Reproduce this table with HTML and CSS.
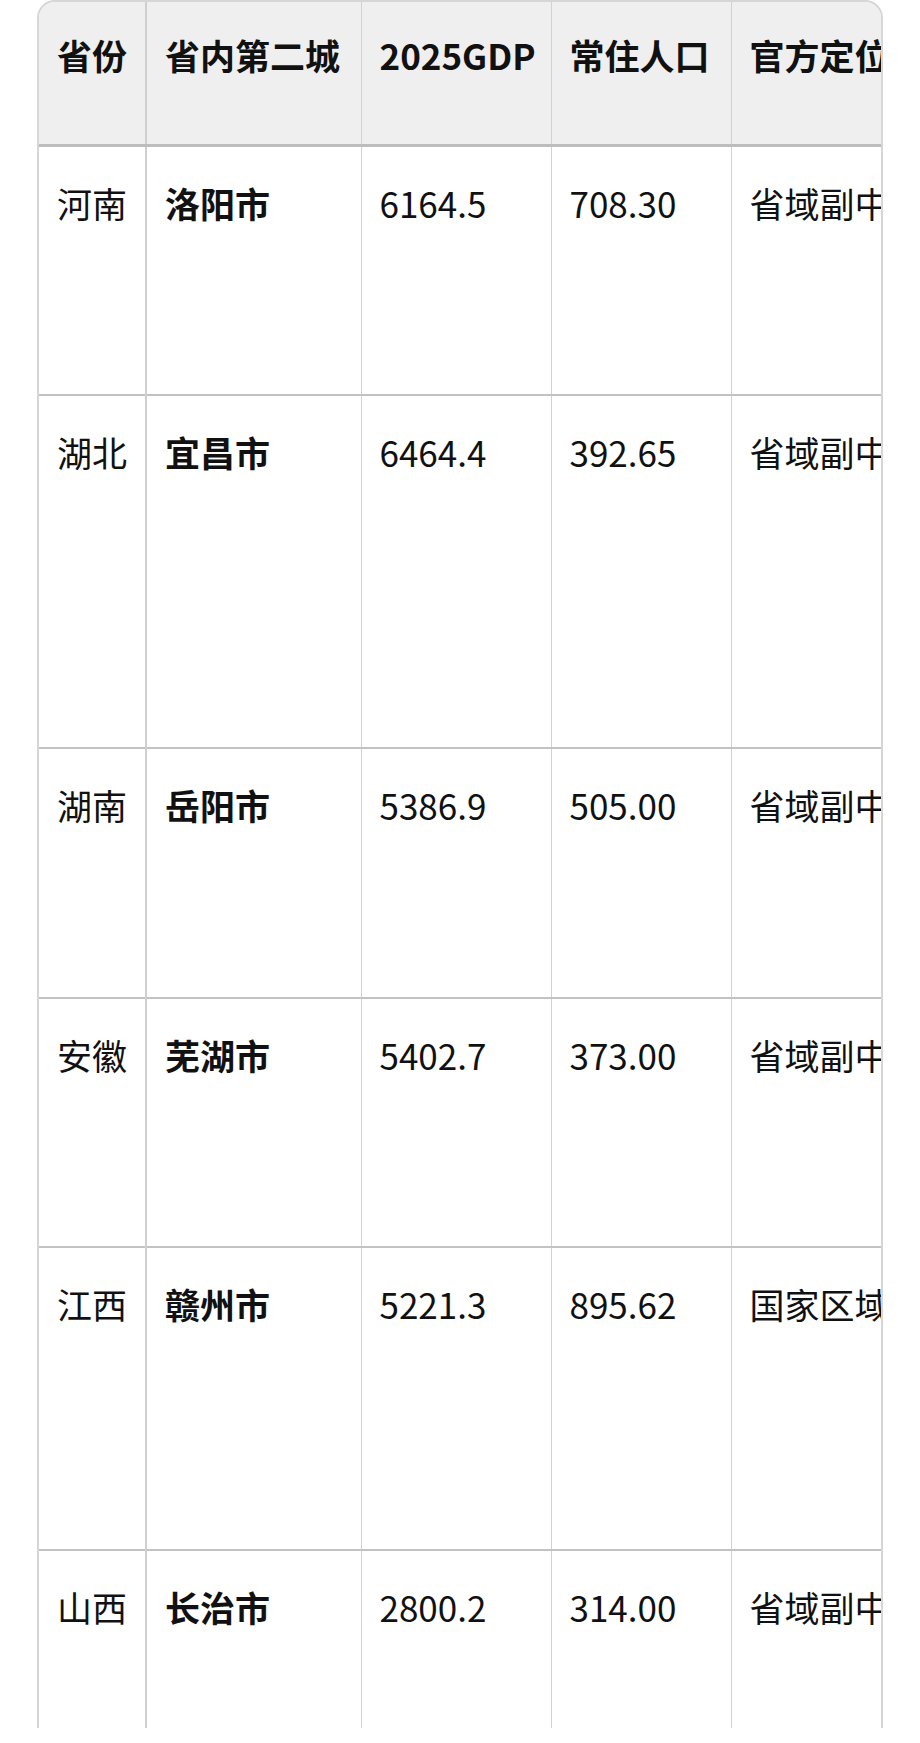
FILE: index.html
```html
<!DOCTYPE html>
<html lang="zh-CN">
<head>
<meta charset="utf-8">
<title>省内第二城</title>
<link rel="stylesheet" href="styles.css">
</head>
<body>
<div class="wrap">
  <table class="grid">
    <colgroup>
      <col class="c1"><col class="c2"><col class="c3"><col class="c4"><col class="c5"><col class="c6">
    </colgroup>
    <thead>
      <tr class="head">
        <th>省份</th><th>省内第二城</th><th>2025GDP</th><th>常住人口</th><th>官方定位</th><th>主导产业</th>
      </tr>
    </thead>
    <tbody>
      <tr class="r1"><td>河南</td><td class="city">洛阳市</td><td>6164.5</td><td>708.30</td><td>省域副中心城市</td><td>装备制造</td></tr>
      <tr class="r2"><td>湖北</td><td class="city">宜昌市</td><td>6464.4</td><td>392.65</td><td>省域副中心城市</td><td>化工</td></tr>
      <tr class="r3"><td>湖南</td><td class="city">岳阳市</td><td>5386.9</td><td>505.00</td><td>省域副中心城市</td><td>石化</td></tr>
      <tr class="r4"><td>安徽</td><td class="city">芜湖市</td><td>5402.7</td><td>373.00</td><td>省域副中心城市</td><td>汽车</td></tr>
      <tr class="r5"><td>江西</td><td class="city">赣州市</td><td>5221.3</td><td>895.62</td><td>国家区域中心城市</td><td>稀土</td></tr>
      <tr class="r6"><td>山西</td><td class="city">长治市</td><td>2800.2</td><td>314.00</td><td>省域副中心城市</td><td>煤炭</td></tr>
    </tbody>
  </table>
</div>
</body>
</html>
```
FILE: styles.css
```css
html, body {
  margin: 0;
  padding: 0;
  background: #ffffff;
}
body {
  font-family: "Noto Sans CJK SC", "Noto Sans", sans-serif;
  color: #111111;
}
.wrap {
  margin: 0 37px;
  height: 1728px;
  overflow: hidden;
  border: 2px solid #d6d6d6;
  border-bottom: none;
  border-radius: 18px 18px 0 0;
  box-sizing: border-box;
}
.grid {
  border-collapse: collapse;
  table-layout: fixed;
  width: 1298px;
  font-size: 35px;
  line-height: 1.5;
}
.c1 { width: 107px; }
.c2 { width: 215px; }
.c3 { width: 190px; }
.c4 { width: 180px; }
.c5 { width: 300px; }
.c6 { width: 306px; }
.grid th, .grid td {
  text-align: left;
  vertical-align: top;
  padding: 30px 12px 0 18px;
  white-space: nowrap;
  overflow: hidden;
  border-left: 1px solid #d2d2d2;
}
.grid th:first-child, .grid td:first-child {
  border-left: none;
  border-right: 2px solid #cfcfcf;
}
.grid th {
  font-weight: 700;
  background: #efefef;
  padding-top: 27px;
}
.head { height: 143px; }
.head th { border-bottom: 3px solid #bdbdbd; }
.grid tbody tr { border-top: 2px solid #c2c2c2; }
.grid thead + tbody tr:first-child { border-top: none; }
.city { font-weight: 700; }
.r1 { height: 250px; }
.r2 { height: 353px; }
.r3 { height: 250px; }
.r4 { height: 249px; }
.r5 { height: 303px; }
.r6 { height: 400px; }
```
